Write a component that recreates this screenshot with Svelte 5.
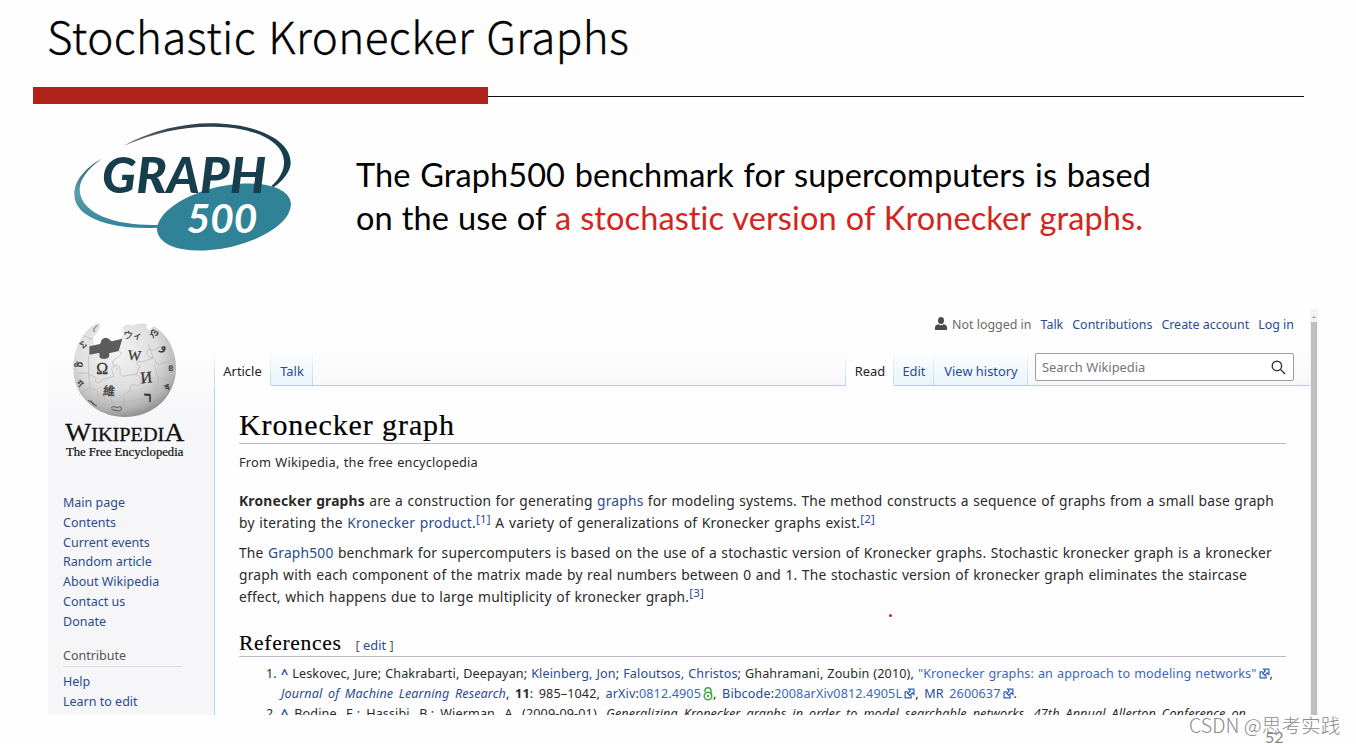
<script>
  // --- Sidebar ---
  const navLinks = ['Main page', 'Contents', 'Current events', 'Random article', 'About Wikipedia', 'Contact us', 'Donate'];
  const contributeLinks = ['Help', 'Learn to edit'];

  // --- Top bar ---
  const personalLinks = ['Talk', 'Contributions', 'Create account', 'Log in'];
</script>

{#snippet external()}
  <svg class="ext" viewBox="0 0 12 12"><path d="M4.3 4.2H1.2v6.6h6.6V8" /><path d="M5 1.2h5.8V7L9 5.4 6.3 8.2 4 6l2.8-2.8z" /></svg>
{/snippet}

<div class="slide">
  <h1 class="title"><span>Stochastic Kronecker Graphs</span></h1>
  <div class="rule"><div class="bar"></div><div class="thin"></div></div>

  <section class="intro">
    <!-- Graph500 logo -->
    <svg class="g500" viewBox="0 0 750 450">
      <defs>
        <linearGradient id="arcTop" x1="0" x2="1">
          <stop offset="0" stop-color="#777" />
          <stop offset=".3" stop-color="#34424b" />
          <stop offset="1" stop-color="#173e4c" />
        </linearGradient>
        <linearGradient id="arcLow" x1="0" x2="0" y1="0" y2="1">
          <stop offset="0" stop-color="#2b5963" />
          <stop offset=".5" stop-color="#5aa0ab" />
          <stop offset="1" stop-color="#308396" />
        </linearGradient>
      </defs>
      <path fill="url(#arcTop)" d="M190 108C270 62 370 40 450 40C585 40 692 88 692 158C692 185 668 213 640 232L634 228C658 208 673 182 672 155C670 96 590 51 458 50C365 49 285 68 190 108Z" />
      <path fill="url(#arcLow)" d="M127 145C75 175 42 212 43 255C45 323 150 360 296 353L296 345C165 348 73 313 60 250C54 212 80 180 127 145Z" />
      <ellipse cx="492" cy="321" rx="205" ry="92" transform="rotate(-13 492 321)" fill="#308396" />
      <text class="g-name" x="126" y="248" textLength="492" lengthAdjust="spacingAndGlyphs">GRAPH</text>
      <text class="g-num" x="380" y="368" textLength="212" lengthAdjust="spacingAndGlyphs">500</text>
    </svg>

    <div class="lead">
      <div class="lead-one">The Graph500 benchmark for supercomputers is based</div>
      <div class="lead-two">on the use of <span class="red">a stochastic version of Kronecker graphs.</span></div>
    </div>
  </section>

  <section class="wiki">
    <aside>
      <!-- Puzzle globe -->
      <svg class="globe" viewBox="75 45 360 420">
        <defs>
          <radialGradient id="ball" cx=".42" cy=".3" r=".72">
            <stop offset="0" stop-color="#f4f4f4" />
            <stop offset=".55" stop-color="#dedede" />
            <stop offset=".85" stop-color="#b4b4b4" />
            <stop offset="1" stop-color="#8d8d8d" />
          </radialGradient>
        </defs>
        <path fill="url(#ball)" d="M180 56C172 50 164 60 155 64C119 92 100 140 100 190C100 276 172 336 254 336C342 336 408 272 408 188C408 138 384 89 342 64L330 74C322 76 316 68 321 58C305 51 286 60 272 61C260 53 245 63 248 77C254 84 248 91 238 100L236 137L207 145C211 158 198 165 181 160C174 153 182 146 176 143L148 149L148 126L162 120L160 96C176 83 181 68 180 56Z" />
        <path fill="#5c5c5c" d="M148 124L180 117C184 111 181 103 194 99C210 98 209 107 216 109L247 101L236 138L207 145C211 159 200 166 181 160C174 153 183 146 176 144L148 149Z" />
        <path class="seam" d="M128 92L158 103M148 149C140 176 151 183 145 205L112 204M145 205C154 216 160 210 168 218C161 236 179 239 185 224L222 214C218 195 207 191 224 181C236 178 244 190 239 203L248 214L289 207M236 138L245 145C240 160 218 158 218 174C219 185 229 184 233 194M300 184L289 207C307 220 310 232 292 243C280 232 262 245 274 258C252 259 250 277 253 290L251 310M300 184C280 174 295 166 303 172L340 159L325 119M340 159C318 159 315 140 327 132C335 130 335 139 342 135L363 123M340 159C350 166 344 177 356 178L400 164M343 178L354 218L400 230M145 205L151 246L117 270M151 246C161 258 168 249 174 260C169 276 184 282 190 267L218 274C208 286 215 298 226 291L253 290L299 284L310 317M354 218C356 249 341 267 336 278L299 284M190 267L202 310" />
        <g class="glyphs">
          <text x="169" y="207" font-size="48">Ω</text>
          <text x="264" y="165" font-size="42" transform="rotate(5 282 150)">W</text>
          <text x="301" y="234" font-size="49" transform="rotate(-6 319 217)">И</text>
          <text class="cjk" x="189" y="271" font-size="36" transform="rotate(5 206 259)">維</text>
          <text x="313" y="290" font-size="44" stroke-width="2">ר</text>
          <text x="250" y="98" font-size="28" transform="rotate(10 267 90)">ウィ</text>
          <text x="121" y="126" font-size="28" transform="rotate(-38 132 118)">Σ</text>
          <text x="108" y="188" font-size="30" transform="rotate(-75 118 178)">ზ</text>
          <text x="112" y="247" font-size="28" transform="rotate(42 122 239)">ग</text>
          <text x="331" y="92" font-size="30" transform="rotate(30 343 82)">ღ</text>
          <text x="363" y="136" font-size="38" transform="rotate(20 373 127)">و</text>
          <text x="385" y="198" font-size="26">ខ</text>
          <text x="376" y="255" font-size="26" transform="rotate(-20 386 247)">ষ</text>
          <path d="M144 286C153 289 158 300 171 303M151 286L166 300M214 309C221 298 230 313 236 306C247 300 247 319 235 318L214 313M163 81C158 67 169 67 172 61" />
        </g>
        <text class="word" x="75" y="409" textLength="358" lengthAdjust="spacingAndGlyphs"><tspan font-size="74">W</tspan>IKIPEDI<tspan font-size="74">A</tspan></text>
        <text class="tag" x="78" y="454" textLength="352" lengthAdjust="spacingAndGlyphs">The Free Encyclopedia</text>
      </svg>

      <ul>
        {#each navLinks as link}
          <li><a href="#top">{link}</a></li>
        {/each}
      </ul>
      <h3>Contribute</h3>
      <ul>
        {#each contributeLinks as link}
          <li><a href="#top">{link}</a></li>
        {/each}
      </ul>
    </aside>

    <main>
      <div class="personal">
        <svg class="user" viewBox="0 0 12 13"><ellipse cx="6" cy="3.5" rx="3" ry="3.5" /><path d="M0 13V10.5Q0 8 3.3 7.3Q6 9.2 8.7 7.3Q12 8 12 10.5V13z" /></svg>
        <span class="anon">Not logged in</span>
        {#each personalLinks as link}
          <a href="#top">{link}</a>
        {/each}
      </div>

      <nav>
        <div class="tab active article">Article</div>
        <div class="tab talk">Talk</div>
        <div class="fill"></div>
        <div class="tab active read">Read</div>
        <div class="tab edit">Edit</div>
        <div class="tab history">View history</div>
        <div class="search-wrap">
          <div class="search">
            <span>Search Wikipedia</span>
            <svg viewBox="0 0 16 16"><circle cx="6.3" cy="6.3" r="5" /><path d="M10 10l5 5" /></svg>
          </div>
        </div>
      </nav>

      <article>
        <h2 class="heading"><span>Kronecker graph</span></h2>
        <div class="line from">From Wikipedia, the free encyclopedia</div>

        <div class="para">
          <div class="line w1"><b>Kronecker graphs</b> are a construction for generating <a href="#top">graphs</a> for modeling systems. The method constructs a sequence of graphs from a small base graph</div>
          <div class="line w2">by iterating the <a href="#top">Kronecker product</a>.<sup>[1]</sup> A variety of generalizations of Kronecker graphs exist.<sup>[2]</sup></div>
        </div>
        <div class="para">
          <div class="line w3">The <a href="#top">Graph500</a> benchmark for supercomputers is based on the use of a stochastic version of Kronecker graphs. Stochastic kronecker graph is a kronecker</div>
          <div class="line w4">graph with each component of the matrix made by real numbers between 0 and 1. The stochastic version of kronecker graph eliminates the staircase</div>
          <div class="line w5">effect, which happens due to large multiplicity of kronecker graph.<sup>[3]</sup></div>
        </div>

        <h3 class="refs-title"><span>References</span><small>[ <a href="#top">edit</a> ]</small></h3>

        <div class="refs">
          <div class="ref">
            <span class="num">1.</span>
            <div>
              <div class="line r1"><a href="#top"><b>^</b></a> Leskovec, Jure; Chakrabarti, Deepayan; <a href="#top">Kleinberg, Jon</a>; <a href="#top">Faloutsos, Christos</a>; Ghahramani, Zoubin (2010), <a href="#top" class="out">"Kronecker graphs: an approach to modeling networks"</a>{@render external()},</div>
              <div class="line r2"><a href="#top"><i>Journal of Machine Learning Research</i></a>, <b>11</b>: 985–1042, <a href="#top">arXiv</a>:<a href="#top" class="out">0812.4905</a><svg class="lock" viewBox="0 0 10 14"><path d="M2 5V3.8a3 3 0 0 1 6 0V8" /><circle cx="5" cy="9" r="3.8" /><circle class="dot" cx="5" cy="9" r="1.3" /></svg>, <a href="#top">Bibcode</a>:<a href="#top" class="out">2008arXiv0812.4905L</a>{@render external()}, <a href="#top">MR</a> <a href="#top" class="out">2600637</a>{@render external()}.</div>
            </div>
          </div>
          <div class="ref">
            <span class="num">2.</span>
            <div class="line r3"><a href="#top"><b>^</b></a> Bodine, E.; Hassibi, B.; Wierman, A. (2009-09-01). <i>Generalizing Kronecker graphs in order to model searchable networks</i>. <i>47th Annual Allerton Conference on</i></div>
          </div>
        </div>
      </article>
      <span class="pointer"></span>
    </main>

    <div class="scroll"><div class="arrow"></div><div class="thumb"></div></div>
  </section>

  <span class="page">52</span>
  <span class="mark">CSDN @思考实践</span>
</div>

<style>
  :global(body) {
    margin: 0;
    background: #fff;
  }

  .slide {
    position: relative;
    width: 1356px;
    height: 744px;
    overflow: hidden;
    display: flex;
    flex-direction: column;
    background: #fefefe;
    font-family: 'Noto Sans', 'Open Sans', sans-serif;
    color: #2a2a2a;
  }

  a {
    color: #2b4b8f;
    text-decoration: none;
  }
  ul {
    list-style: none;
    margin: 0;
    padding: 0;
  }

  /* ---- Title ---- */
  .title {
    margin: 0;
    height: 87px;
    padding-left: 47px;
    box-sizing: border-box;
    font: 300 44px/71px 'Noto Sans CJK SC', sans-serif;
    letter-spacing: .4px;
    word-spacing: 2px;
    color: #000;
    white-space: nowrap;
    -webkit-text-stroke: .3px #000;
  }
  .rule {
    display: flex;
    height: 17px;
    padding: 0 52px 0 33px;
  }
  .bar {
    width: 455px;
    background: #ae2219;
  }
  .thin {
    flex: 1;
    height: 1px;
    margin-top: 9px;
    background: #111;
  }

  /* ---- Intro ---- */
  .intro {
    display: flex;
    height: 205px;
    padding-left: 60px;
  }
  .g500 {
    width: 250px;
    height: 150px;
    margin-top: 6px;
  }
  .g-name {
    font: italic 900 150px Lato, sans-serif;
    fill: #173e4c;
  }
  .g-num {
    font: italic 700 122px Lato, sans-serif;
    fill: #fff;
  }
  .lead {
    margin: 49px 0 0 46px;
    font: 400 32.5px/43px Lato, sans-serif;
    font-variant-ligatures: none;
    letter-spacing: .1px;
    color: #000;
    white-space: nowrap;
  }
  .lead-one, .lead-two { text-align-last: justify; }
  .lead-one { width: 795px; }
  .lead-two { width: 787px; }
  .red { color: #d4251c; }

  /* ---- Wiki window ---- */
  .wiki {
    display: flex;
    height: 406px;
    margin-left: 48px;
    width: 1270px;
    overflow: hidden;
  }
  aside {
    width: 166px;
    box-sizing: border-box;
    padding: 11px 0 0 15px;
    background: linear-gradient(#fefefe 35px, #f6f6f8 110px);
    font-size: 12.5px;
  }
  .globe {
    display: block;
    width: 120px;
    height: 140px;
    margin: 0 0 33px 2px;
  }
  .seam {
    fill: none;
    stroke: #b4b4b4;
    stroke-width: 2;
  }
  .glyphs {
    font-family: 'Liberation Serif', 'DejaVu Serif', serif;
    fill: #333;
    stroke: #333;
    stroke-width: .8;
  }
  .glyphs path {
    fill: none;
    stroke: #555;
    stroke-width: 3;
  }
  .cjk { font-family: 'Noto Sans CJK TC', sans-serif; }
  .word {
    font: 54px 'Liberation Serif', serif;
    fill: #111;
    stroke: #111;
    stroke-width: .8;
  }
  .tag {
    font: 38px 'Liberation Serif', serif;
    fill: #111;
    stroke: #111;
    stroke-width: .7;
  }
  aside li {
    height: 19.75px;
    line-height: 19.75px;
    white-space: nowrap;
  }
  aside h3 {
    width: 119px;
    height: 20px;
    margin: 15px 0 5px;
    border-bottom: 1px solid #dcdcdf;
    font: 400 12.5px/19px 'Noto Sans', sans-serif;
    color: #555;
  }

  main {
    position: relative;
    width: 1096px;
    background: linear-gradient(#fefefe 40px, #f7f7f9 76px, #fefefe 77px);
  }
  .personal {
    display: flex;
    align-items: center;
    gap: 9px;
    height: 31px;
    padding-right: 16px;
    justify-content: flex-end;
    font-size: 12.45px;
    white-space: nowrap;
  }
  .user {
    width: 12px;
    height: 13px;
    margin: -3px -4px 0 0;
    fill: #4a4a4a;
  }
  .anon { color: #6b6b6b; }

  /* ---- Tabs ---- */
  nav {
    display: flex;
    height: 36px;
    margin-top: 10px;
    line-height: 43px;
    font-size: 12.9px;
  }
  .tab {
    box-sizing: border-box;
    border-bottom: 1px solid #a7d3e8;
    background:
      linear-gradient(#fefefe, #b5dbee) right / 1px 100% no-repeat,
      linear-gradient(#fefefe, #e9f4fb);
    color: #2b4b8f;
    text-align: center;
    white-space: nowrap;
  }
  .active {
    background:
      linear-gradient(#fefefe, #b5dbee) right / 1px 100% no-repeat,
      #fefefe;
    border-bottom-color: #fefefe;
    color: #222;
  }
  .article {
    width: 57px;
    background:
      linear-gradient(#fefefe, #b5dbee) left / 1px 100% no-repeat,
      linear-gradient(#fefefe, #b5dbee) right / 1px 100% no-repeat,
      #fefefe;
  }
  .talk { width: 42px; }
  .fill {
    width: 533px;
    box-sizing: border-box;
    background: linear-gradient(#fefefe, #b5dbee) right / 1px 100% no-repeat;
    border-bottom: 1px solid #a7d3e8;
  }
  .read { width: 48px; }
  .edit { width: 40px; }
  .history { width: 94px; }
  .search-wrap {
    flex: 1;
    padding: 3px 16px 4px 7px;
    border-bottom: 1px solid #a7d3e8;
  }
  .search {
    display: flex;
    align-items: center;
    justify-content: space-between;
    height: 26px;
    padding: 0 7px 0 6px;
    border: 1px solid #999da3;
    border-radius: 2px;
    background: #fff;
    color: #72777d;
    line-height: 28px;
  }
  .search svg {
    width: 15px;
    height: 15px;
    fill: none;
    stroke: #333;
    stroke-width: 1.5;
  }

  /* ---- Article ---- */
  article {
    height: 329px;
    box-sizing: border-box;
    padding: 20px 24px 0;
    border-left: 1px solid #a7d7f9;
    background: #fefefe;
    font-size: 13.8px;
    letter-spacing: .2px;
  }
  .heading {
    height: 37px;
    margin: 0;
    border-bottom: 1px solid #b8bcc2;
    font: 400 30px/38px 'Liberation Serif', serif;
    color: #000;
    letter-spacing: .9px;
    -webkit-text-stroke: .2px #000;
  }
  .line {
    white-space: nowrap;
    text-align-last: justify;
  }
  .from {
    width: 239px;
    margin-top: 9px;
    font-size: 12.8px;
    line-height: 19px;
  }
  .para {
    line-height: 22.3px;
    margin-top: 7px;
  }
  .from + .para { margin-top: 18px; }
  sup {
    color: #2b4b8f;
    font-size: 11.5px;
    line-height: 1;
    vertical-align: 5px;
  }
  .w1 { width: 1035px; }
  .w2 { width: 636px; }
  .w3 { width: 1033px; }
  .w4 { width: 1008px; }
  .w5 { width: 465px; }

  .refs-title {
    height: 27px;
    margin: 21px 0 0;
    border-bottom: 1px solid #b8bcc2;
    font: 400 21.5px/28px 'Liberation Serif', serif;
    color: #000;
    letter-spacing: .7px;
    -webkit-text-stroke: .15px #000;
  }
  .refs-title small {
    margin-left: 14px;
    font: 12.8px 'Noto Sans', sans-serif;
    letter-spacing: 0;
    color: #54595d;
    -webkit-text-stroke: 0;
  }
  .refs {
    margin-top: 7px;
    font-size: 12.6px;
    line-height: 20px;
    letter-spacing: .12px;
  }
  .ref { display: flex; }
  .num {
    width: 15px;
    margin-left: 27px;
  }
  .r1 { width: 992px; }
  .r2 { width: 736px; }
  .r3 { width: 965px; }
  .out { color: #3b68b5; }
  .ext {
    width: 11px;
    height: 11px;
    margin: 0 0 -1px 2px;
    fill: none;
    stroke: #2a5db8;
    stroke-width: 1.3;
  }
  .lock {
    width: 10px;
    height: 14px;
    margin: 0 0 -3px 2px;
    fill: none;
    stroke: #46a546;
    stroke-width: 1.5;
  }
  .lock .dot {
    fill: #46a546;
    stroke: none;
  }

  .pointer {
    position: absolute;
    left: 675px;
    top: 305px;
    width: 3px;
    height: 3px;
    border-radius: 50%;
    background: #d22;
  }

  /* ---- Scrollbar ---- */
  .scroll {
    width: 8px;
    background: #f3f3f4;
  }
  .arrow {
    height: 13px;
    display: flex;
    align-items: center;
    justify-content: center;
  }
  .arrow::before {
    content: '';
    border: 2px solid transparent;
    border-bottom-color: #999;
  }
  .thumb {
    height: 393px;
    margin: 0 1px;
    background: #bfbfc1;
  }

  /* ---- Page number and watermark ---- */
  .page {
    position: absolute;
    left: 1265px;
    top: 727px;
    font: 16px/20px Lato, sans-serif;
    color: #888;
  }
  .mark {
    position: absolute;
    left: 1189px;
    top: 711px;
    font: 300 19.7px/27px 'Noto Sans CJK SC', sans-serif;
    color: #8d8d8d;
    white-space: nowrap;
  }
</style>
